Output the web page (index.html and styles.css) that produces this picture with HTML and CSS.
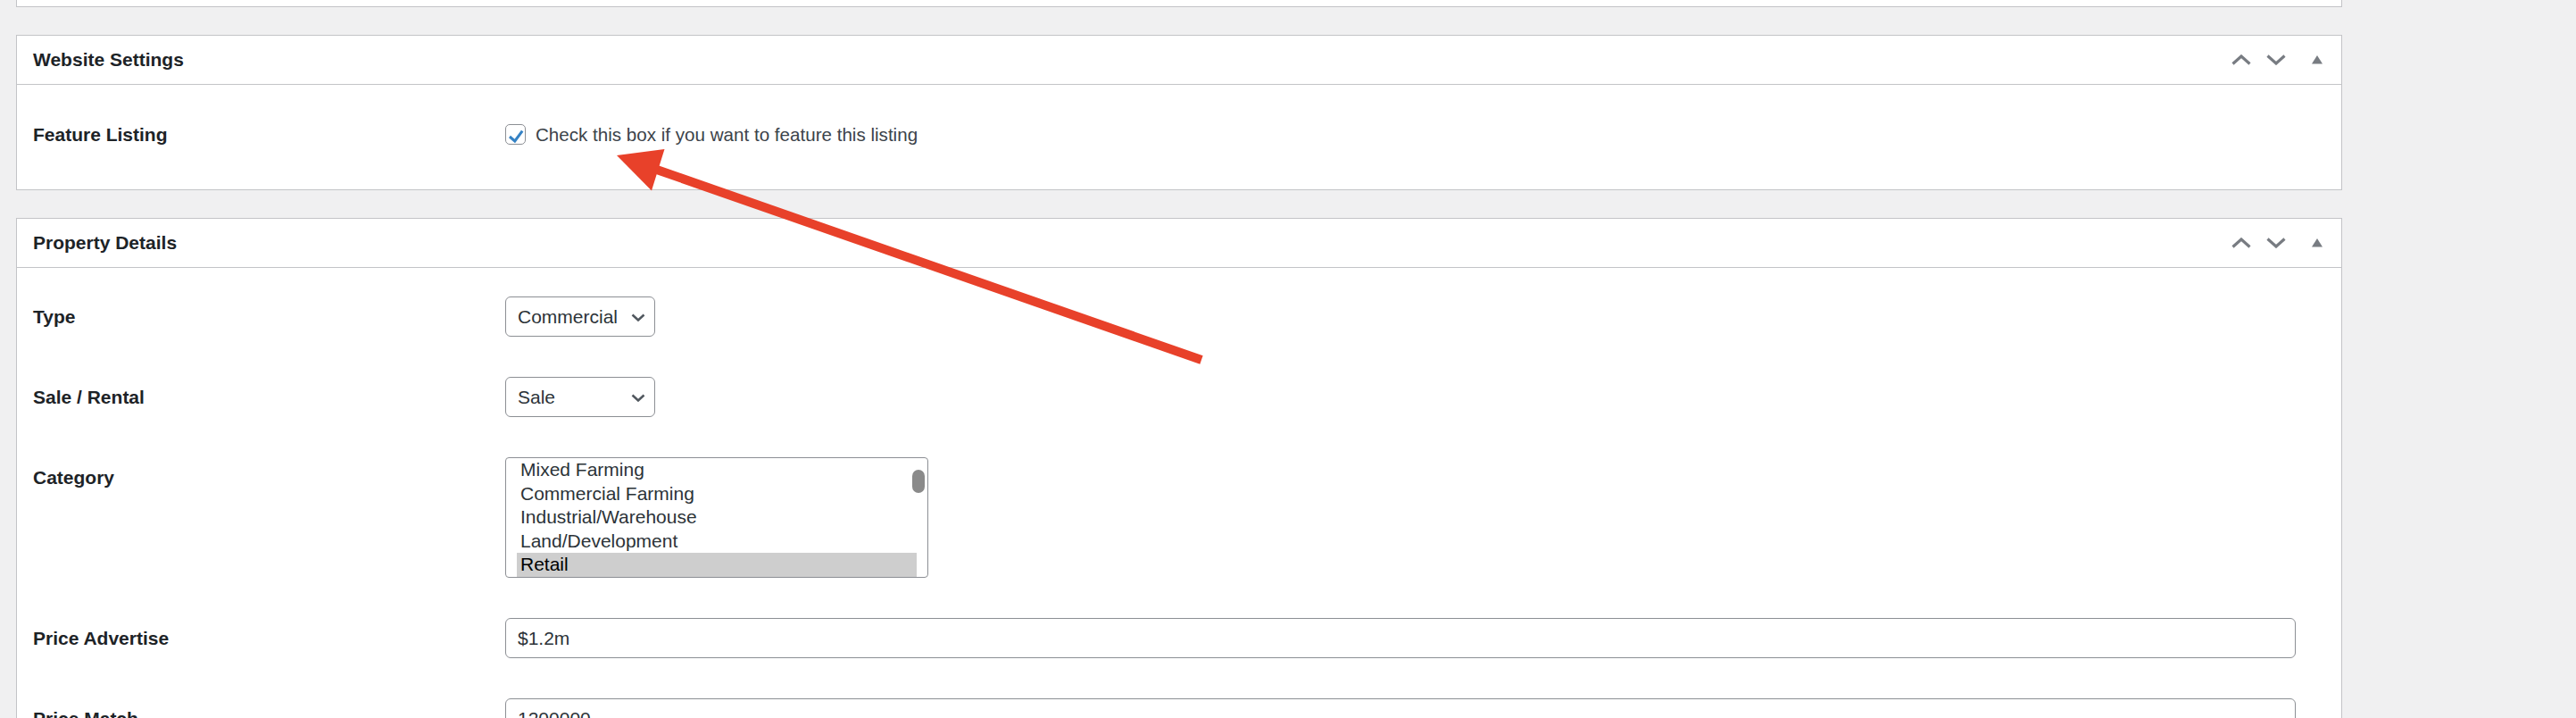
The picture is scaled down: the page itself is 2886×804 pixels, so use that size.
FILE: index.html
```html
<!DOCTYPE html>
<html lang="en">
<head>
    <meta charset="UTF-8">
    <meta name="viewport" content="width=device-width, initial-scale=1.0">
    <title>Edit Listing</title>
    <link rel="stylesheet" href="styles.css">
</head>
<body>
    <div class="meta-boxes">
        <!-- bottom edge of the box above, scrolled out of view -->
        <div class="postbox postbox-tail"></div>

        <div class="postbox">
            <div class="postbox-header">
                <h2>Website Settings</h2>
                <div class="handle-actions">
                    <button class="handle-btn" type="button" aria-label="Move up">
                        <svg width="22" height="12" viewBox="0 0 22 12"><polyline points="1.5,10.5 11,2 20.5,10.5" /></svg>
                    </button>
                    <button class="handle-btn" type="button" aria-label="Move down">
                        <svg width="22" height="12" viewBox="0 0 22 12"><polyline points="1.5,1.5 11,10 20.5,1.5" /></svg>
                    </button>
                    <button class="handle-btn handle-toggle" type="button" aria-label="Toggle panel">
                        <svg width="12" height="10" viewBox="0 0 12 10"><polygon points="6,0 12,9.5 0,9.5" /></svg>
                    </button>
                </div>
            </div>
            <div class="inside form-grid settings-grid">
                <div class="field-label">Feature Listing</div>
                <div class="field-control">
                    <label class="check">
                        <span class="check-box">
                            <svg width="21" height="21" viewBox="0 0 21 21"><polyline points="4,13 9.8,18 18.2,6.6" /></svg>
                        </span>
                        Check this box if you want to feature this listing
                    </label>
                </div>
            </div>
        </div>

        <div class="postbox">
            <div class="postbox-header">
                <h2>Property Details</h2>
                <div class="handle-actions">
                    <button class="handle-btn" type="button" aria-label="Move up">
                        <svg width="22" height="12" viewBox="0 0 22 12"><polyline points="1.5,10.5 11,2 20.5,10.5" /></svg>
                    </button>
                    <button class="handle-btn" type="button" aria-label="Move down">
                        <svg width="22" height="12" viewBox="0 0 22 12"><polyline points="1.5,1.5 11,10 20.5,1.5" /></svg>
                    </button>
                    <button class="handle-btn handle-toggle" type="button" aria-label="Toggle panel">
                        <svg width="12" height="10" viewBox="0 0 12 10"><polygon points="6,0 12,9.5 0,9.5" /></svg>
                    </button>
                </div>
            </div>
            <div class="inside form-grid">
                <div class="field-label">Type</div>
                <div class="field-control">
                    <div class="select-wrap">
                        <select>
                            <option selected>Commercial</option>
                            <option>Residential</option>
                            <option>Rural</option>
                        </select>
                        <svg class="select-arrow" width="16" height="9" viewBox="0 0 16 9"><polyline points="1.5,1.5 8,7.5 14.5,1.5" /></svg>
                    </div>
                </div>

                <div class="field-label">Sale / Rental</div>
                <div class="field-control">
                    <div class="select-wrap">
                        <select>
                            <option selected>Sale</option>
                            <option>Rental</option>
                        </select>
                        <svg class="select-arrow" width="16" height="9" viewBox="0 0 16 9"><polyline points="1.5,1.5 8,7.5 14.5,1.5" /></svg>
                    </div>
                </div>

                <div class="field-label">Category</div>
                <div class="field-control">
                    <div class="listbox" role="listbox">
                        <div class="listbox-option">Mixed Farming</div>
                        <div class="listbox-option">Commercial Farming</div>
                        <div class="listbox-option">Industrial/Warehouse</div>
                        <div class="listbox-option">Land/Development</div>
                        <div class="listbox-option is-selected">Retail</div>
                        <div class="listbox-option">Office</div>
                        <div class="listbox-option">Hospitality</div>
                        <span class="listbox-thumb"></span>
                    </div>
                </div>

                <div class="field-label">Price Advertise</div>
                <div class="field-control">
                    <input class="text-input" type="text" value="$1.2m">
                </div>

                <div class="field-label">Price Match</div>
                <div class="field-control">
                    <input class="text-input" type="text" value="1200000">
                </div>
            </div>
        </div>
    </div>

    <!-- red callout pointing at the feature checkbox -->
    <svg class="callout" width="2886" height="804" viewBox="0 0 2886 804">
        <line x1="1346" y1="403" x2="733" y2="189" />
        <polygon points="691,174 744.5,167 730,213.5" />
    </svg>
</body>
</html>
```

FILE: styles.css
```css
html, body {
    margin: 0;
    overflow: hidden;
}
body {
    position: relative;
    background-color: #f0f0f1;
    font-family: "Liberation Sans", Arial, sans-serif;
    font-size: 21px;
    color: #3c434a;
}
.meta-boxes {
    width: 2606px;
    margin-left: 18px;
}
.postbox {
    background-color: #fff;
    border: 1px solid #c3c4c7;
    margin-bottom: 31px;
    box-sizing: border-box;
}
.postbox-tail {
    height: 8px;
    border-top: 0;
}
.postbox-header {
    display: flex;
    align-items: center;
    justify-content: space-between;
    height: 54px;
    border-bottom: 1px solid #c3c4c7;
}
.postbox-header h2 {
    margin: 0;
    padding-left: 18px;
    font-size: 21px;
    font-weight: bold;
    color: #1d2327;
}
.handle-actions {
    display: flex;
    height: 100%;
}
.handle-btn {
    width: 39px;
    height: 54px;
    padding: 0;
    border: 0;
    background: none;
    display: flex;
    align-items: center;
    justify-content: center;
}
.handle-btn polyline {
    fill: none;
    stroke: #787c82;
    stroke-width: 3.2;
}
.handle-btn polygon {
    fill: #787c82;
}
.handle-toggle {
    width: 54px;
}
.form-grid {
    display: grid;
    grid-template-columns: 529px 1fr;
    row-gap: 45px;
    align-items: start;
    padding: 32px 51px 45px 18px;
}
.settings-grid {
    padding: 33px 51px 39px 18px;
}
.field-label {
    line-height: 45px;
    font-weight: bold;
    color: #1d2327;
}
.check {
    display: flex;
    align-items: center;
    gap: 11px;
    height: 45px;
    font-size: 20.6px;
}
.check-box {
    width: 23px;
    height: 23px;
    box-sizing: border-box;
    border: 1px solid #8c8f94;
    border-radius: 5px;
    background-color: #fff;
}
.check-box svg {
    display: block;
}
.check-box polyline {
    fill: none;
    stroke: #3582c4;
    stroke-width: 3;
}
.select-wrap {
    position: relative;
    width: 168px;
    height: 45px;
}
.select-wrap select {
    -webkit-appearance: none;
    appearance: none;
    width: 100%;
    height: 100%;
    margin: 0;
    padding: 0 36px 0 13px;
    border: 1px solid #8c8f94;
    border-radius: 6px;
    background-color: #fff;
    font-family: inherit;
    font-size: 21px;
    color: #2c3338;
}
.select-arrow {
    position: absolute;
    right: 11px;
    top: 50%;
    margin-top: -4px;
    pointer-events: none;
}
.select-arrow polyline {
    fill: none;
    stroke: #50575e;
    stroke-width: 2.5;
}
.listbox {
    position: relative;
    width: 474px;
    height: 135px;
    box-sizing: border-box;
    padding: 0 12px;
    border: 1px solid #8c8f94;
    border-radius: 4px;
    overflow: hidden;
    color: #2c3338;
}
.listbox-option {
    height: 26.6px;
    line-height: 26.6px;
    padding-left: 4px;
    white-space: nowrap;
}
.listbox-option.is-selected {
    background-color: #cecece;
    color: #000;
}
.listbox-thumb {
    position: absolute;
    top: 13px;
    right: 3px;
    width: 14px;
    height: 26px;
    border-radius: 7px;
    background-color: #8a8a8a;
}
.text-input {
    display: block;
    width: 100%;
    height: 45px;
    box-sizing: border-box;
    margin: 0;
    padding: 0 13px;
    border: 1px solid #8c8f94;
    border-radius: 6px;
    background-color: #fff;
    font-family: inherit;
    font-size: 21px;
    color: #2c3338;
}
.callout {
    position: absolute;
    top: 0;
    left: 0;
    pointer-events: none;
}
.callout line {
    stroke: #e8412a;
    stroke-width: 10;
}
.callout polygon {
    fill: #e8412a;
}
```
